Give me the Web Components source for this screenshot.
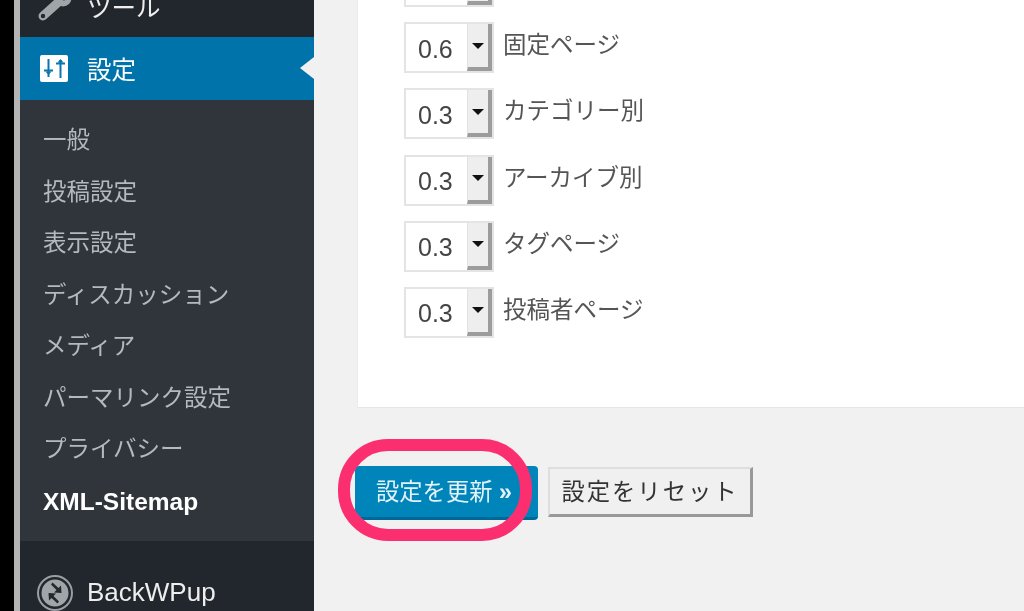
<!DOCTYPE html>
<html lang="ja">
<head>
<meta charset="utf-8">
<title>設定</title>
<style>
  html, body { margin: 0; height: 611px; overflow: hidden; background: #f1f1f1; }
  body { font-family: "Liberation Sans", "Noto Sans CJK JP", sans-serif; }
</style>
</head>
<body>
<wp-shell>
  <wp-sidebar slot="side">
    <wp-menu-item icon="tools" class="cut">ツール</wp-menu-item>
    <wp-menu-item icon="settings" active>設定</wp-menu-item>
    <wp-submenu>
      <wp-sub-item>一般</wp-sub-item>
      <wp-sub-item>投稿設定</wp-sub-item>
      <wp-sub-item>表示設定</wp-sub-item>
      <wp-sub-item>ディスカッション</wp-sub-item>
      <wp-sub-item>メディア</wp-sub-item>
      <wp-sub-item>パーマリンク設定</wp-sub-item>
      <wp-sub-item>プライバシー</wp-sub-item>
      <wp-sub-item current>XML-Sitemap</wp-sub-item>
    </wp-submenu>
    <wp-menu-item icon="backwpup" class="plugin">BackWPup</wp-menu-item>
  </wp-sidebar>
  <wp-card>
    <wp-priority value="0.6"></wp-priority>
    <wp-priority value="0.6">固定ページ</wp-priority>
    <wp-priority value="0.3">カテゴリー別</wp-priority>
    <wp-priority value="0.3">アーカイブ別</wp-priority>
    <wp-priority value="0.3">タグページ</wp-priority>
    <wp-priority value="0.3">投稿者ページ</wp-priority>
  </wp-card>
  <wp-actions>
    <wp-button primary>設定を更新 <b>»</b></wp-button>
    <wp-button>設定をリセット</wp-button>
  </wp-actions>
</wp-shell>

<script>
const JP = '"Liberation Sans", "Noto Sans CJK JP", sans-serif';

const ICONS = {
  tools: `<svg width="32" height="32" viewBox="0 0 32 32" style="overflow:visible">
    <path d="M6 25L25 8" stroke="#a0a5aa" stroke-width="9" stroke-linecap="round"/>
    <circle cx="26" cy="7" r="8.500" fill="#a0a5aa"/>
    <path d="M27 6L36 -3" stroke="#23282d" stroke-width="6.500" stroke-linecap="round"/>
    <circle cx="6" cy="25" r="2.200" fill="#23282d"/></svg>`,
  settings: `<svg width="28" height="27" viewBox="0 0 28 27"><rect width="28" height="27" rx="2" fill="#fff"/>
    <path d="M8.500 4v18M20.500 5v18M4 15.500h9M16 8.500h9" stroke="#0a76ad" stroke-width="2" fill="none"/>
    <path d="M5.500 16.500h6l-3 3.500zM17.500 7.500h6l-3-3.500z" fill="#0a76ad"/></svg>`,
  backwpup: `<svg width="36" height="36" viewBox="0 0 36 36"><circle cx="18" cy="18" r="17" fill="none" stroke="#9a9ea3" stroke-width="2"/>
    <circle cx="18" cy="18" r="13.500" fill="#a0a5aa"/>
    <path d="M15.500 7.500l6 5.500 2.500-2.500 .5 7.500-7.500-.5 2.500-2.500-5.500-5.500z" fill="#23282d"/>
    <path d="M15.500 7.500l6 5.500 2.500-2.500 .5 7.500-7.500-.5 2.500-2.500-5.500-5.500z" fill="#23282d" transform="rotate(180 18 18)"/></svg>`
};

class WpShell extends HTMLElement {
  constructor() {
    super();
    this.attachShadow({ mode: "open" }).innerHTML = `
      <style>
        :host { display: flex; width: 1024px; height: 611px; overflow: hidden; background: #f1f1f1; position: relative; filter: blur(.5px); }
        .edge { width: 14px; background: #000; flex: none; }
        .strip { width: 6px; background: #b4b4b4; flex: none; }
        .main { flex: 1; min-width: 0; padding-left: 43px; display: flex; flex-direction: column; }
        .ring { position: absolute; left: 338px; top: 439px; width: 194px; height: 102px; box-sizing: border-box;
                border: 12px solid #fb2f6f; border-radius: 50px; }
      </style>
      <div class="edge"></div><div class="strip"></div>
      <slot name="side"></slot>
      <div class="main"><slot></slot></div>
      <div class="ring"></div>`;
  }
}

class WpSidebar extends HTMLElement {
  constructor() {
    super();
    this.attachShadow({ mode: "open" }).innerHTML = `
      <style>
        :host { display: flex; flex-direction: column; width: 294px; flex: none; background: #22262d; margin-top: -26px; height: 637px; }
      </style><slot></slot>`;
  }
}

class WpMenuItem extends HTMLElement {
  connectedCallback() {
    if (this.shadowRoot) return;
    const active = this.hasAttribute("active");
    const plugin = this.classList.contains("plugin");
    const cut = this.classList.contains("cut");
    this.attachShadow({ mode: "open" }).innerHTML = `
      <style>
        :host { display: flex; align-items: center; position: relative; height: 63px; flex: none; box-sizing: border-box;
                ${plugin ? "margin-top: 20px;" : ""} ${cut ? "padding-top: 2px;" : ""}
                font: ${plugin ? "26px" : "24.500px"} ${JP}; color: ${active ? "#fff" : "#eee"}; background: ${active ? "#0073aa" : "transparent"}; }
        .icon { width: 67px; padding-left: ${active ? 20 : 17}px; box-sizing: border-box; display: flex; flex: none; }
        .tip { position: absolute; right: 0; top: 20px; border: 11px solid transparent; border-right: 14px solid #f1f1f1; border-left: 0; }
      </style>
      <span class="icon">${ICONS[this.getAttribute("icon")]}</span>
      <slot></slot>
      ${active ? '<span class="tip"></span>' : ""}`;
  }
}

class WpSubmenu extends HTMLElement {
  constructor() {
    super();
    this.attachShadow({ mode: "open" }).innerHTML = `
      <style>
        :host { display: flex; flex-direction: column; height: 441px; flex: none; box-sizing: border-box; padding: 13.500px 0 0; background: #30353c; }
      </style><slot></slot>`;
  }
}

class WpSubItem extends HTMLElement {
  connectedCallback() {
    if (this.shadowRoot) return;
    const cur = this.hasAttribute("current");
    this.attachShadow({ mode: "open" }).innerHTML = `
      <style>
        :host { display: flex; align-items: center; height: 51.500px; padding-left: 43px; margin-left: -20px; margin-top: ${cur ? 3 : 0}px; flex: none; box-sizing: border-box;
                padding-bottom: 2px; font: ${cur ? "bold 24.500px" : "23.500px"} ${JP}; color: ${cur ? "#fff" : "#b4b9be"}; white-space: nowrap; }
      </style><slot></slot>`;
  }
}

class WpCard extends HTMLElement {
  constructor() {
    super();
    this.attachShadow({ mode: "open" }).innerHTML = `
      <style>
        :host { display: block; height: 408px; box-sizing: border-box; flex: none;
                padding: 0 0 0 46px; background: #fff; border-bottom: 1px solid #e6e6e6; border-left: 1px solid #ececec; overflow: hidden; }
        .in { margin-top: -44px; display: flex; flex-direction: column; gap: 15.200px; }
      </style><div class="in"><slot></slot></div>`;
  }
}

class WpPriority extends HTMLElement {
  connectedCallback() {
    if (this.shadowRoot) return;
    this.attachShadow({ mode: "open" }).innerHTML = `
      <style>
        :host { display: flex; align-items: flex-start; height: 51px; flex: none; color: #555; font: 23.500px ${JP}; }
        .sel { display: flex; width: 90px; height: 51px; box-sizing: border-box; border: 2px solid #e4e4e4; background: #fff; flex: none; }
        .val { flex: 1; display: flex; align-items: center; padding-left: 12px; font-size: 25px; color: #444; padding-top: 3px; }
        .arrow { width: 25px; flex: none; margin: 0; box-sizing: border-box; background: #eee;
                 border-right: 4px solid #9c9c9c; border-bottom: 4px solid #9c9c9c; border-left: 1px solid #e2e2e2;
                 display: flex; align-items: center; justify-content: center; }
        .arrow i { border: 6px solid transparent; border-top: 6px solid #111; border-bottom: 0; }
        .label { padding: 8px 0 0 10px; line-height: 30px; white-space: nowrap; margin-left: -1px; }
      </style>
      <div class="sel"><span class="val">${this.getAttribute("value")}</span><span class="arrow"><i></i></span></div>
      <span class="label"><slot></slot></span>`;
  }
}

class WpActions extends HTMLElement {
  constructor() {
    super();
    this.attachShadow({ mode: "open" }).innerHTML = `
      <style>
        :host { display: flex; align-items: flex-start; gap: 10px; margin: 58px 0 0 -2px; }
      </style><slot></slot>`;
  }
}

class WpButton extends HTMLElement {
  connectedCallback() {
    if (this.shadowRoot) return;
    const p = this.hasAttribute("primary");
    this.attachShadow({ mode: "open" }).innerHTML = `
      <style>
        :host { display: inline-flex; align-items: center; justify-content: center; box-sizing: border-box; white-space: nowrap;
                font: 23.300px ${JP}; flex: none; padding-bottom: 3px;
                ${p
                  ? "width: 183px; height: 54px; color: #e4f2f8; background: #0085ba; border-radius: 4px; border-bottom: 3px solid #006799; padding-right: 5px;"
                  : "width: 205px; height: 50px; margin-top: 1px; color: #333; background: #f0f0f0; border: 2px solid #dedede; border-right: 3px solid #999; border-bottom: 3px solid #999; letter-spacing: 2px;"}
      </style><span><slot></slot></span>`;
  }
}

customElements.define("wp-shell", WpShell);
customElements.define("wp-sidebar", WpSidebar);
customElements.define("wp-menu-item", WpMenuItem);
customElements.define("wp-submenu", WpSubmenu);
customElements.define("wp-sub-item", WpSubItem);
customElements.define("wp-card", WpCard);
customElements.define("wp-priority", WpPriority);
customElements.define("wp-actions", WpActions);
customElements.define("wp-button", WpButton);
</script>
</body>
</html>
